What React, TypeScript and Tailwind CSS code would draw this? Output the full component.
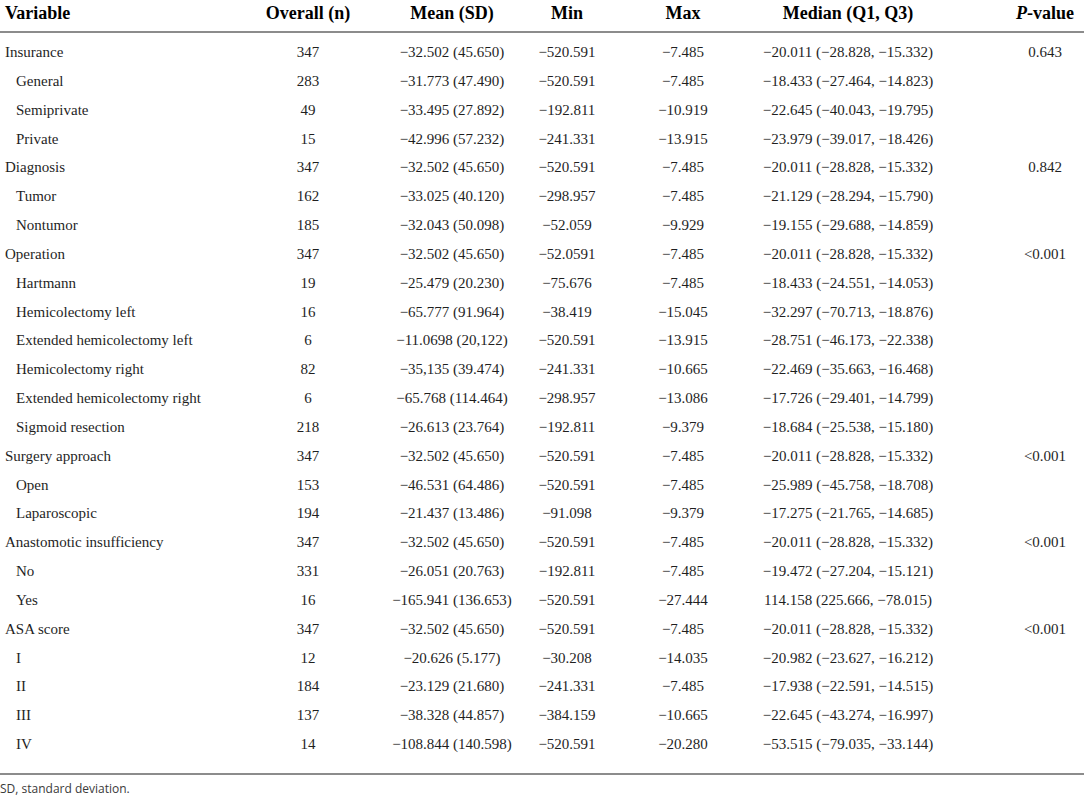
import React from "react";

type Row = { label: string; sub?: boolean; n: string; mean: string; min: string; max: string; median: string; p?: string };

const rows: Row[] = [
  { label: "Insurance", n: "347", mean: "−32.502 (45.650)", min: "−520.591", max: "−7.485", median: "−20.011 (−28.828, −15.332)", p: "0.643" },
  { label: "General", sub: true, n: "283", mean: "−31.773 (47.490)", min: "−520.591", max: "−7.485", median: "−18.433 (−27.464, −14.823)" },
  { label: "Semiprivate", sub: true, n: "49", mean: "−33.495 (27.892)", min: "−192.811", max: "−10.919", median: "−22.645 (−40.043, −19.795)" },
  { label: "Private", sub: true, n: "15", mean: "−42.996 (57.232)", min: "−241.331", max: "−13.915", median: "−23.979 (−39.017, −18.426)" },
  { label: "Diagnosis", n: "347", mean: "−32.502 (45.650)", min: "−520.591", max: "−7.485", median: "−20.011 (−28.828, −15.332)", p: "0.842" },
  { label: "Tumor", sub: true, n: "162", mean: "−33.025 (40.120)", min: "−298.957", max: "−7.485", median: "−21.129 (−28.294, −15.790)" },
  { label: "Nontumor", sub: true, n: "185", mean: "−32.043 (50.098)", min: "−52.059", max: "−9.929", median: "−19.155 (−29.688, −14.859)" },
  { label: "Operation", n: "347", mean: "−32.502 (45.650)", min: "−52.0591", max: "−7.485", median: "−20.011 (−28.828, −15.332)", p: "<0.001" },
  { label: "Hartmann", sub: true, n: "19", mean: "−25.479 (20.230)", min: "−75.676", max: "−7.485", median: "−18.433 (−24.551, −14.053)" },
  { label: "Hemicolectomy left", sub: true, n: "16", mean: "−65.777 (91.964)", min: "−38.419", max: "−15.045", median: "−32.297 (−70.713, −18.876)" },
  { label: "Extended hemicolectomy left", sub: true, n: "6", mean: "−11.0698 (20,122)", min: "−520.591", max: "−13.915", median: "−28.751 (−46.173, −22.338)" },
  { label: "Hemicolectomy right", sub: true, n: "82", mean: "−35,135 (39.474)", min: "−241.331", max: "−10.665", median: "−22.469 (−35.663, −16.468)" },
  { label: "Extended hemicolectomy right", sub: true, n: "6", mean: "−65.768 (114.464)", min: "−298.957", max: "−13.086", median: "−17.726 (−29.401, −14.799)" },
  { label: "Sigmoid resection", sub: true, n: "218", mean: "−26.613 (23.764)", min: "−192.811", max: "−9.379", median: "−18.684 (−25.538, −15.180)" },
  { label: "Surgery approach", n: "347", mean: "−32.502 (45.650)", min: "−520.591", max: "−7.485", median: "−20.011 (−28.828, −15.332)", p: "<0.001" },
  { label: "Open", sub: true, n: "153", mean: "−46.531 (64.486)", min: "−520.591", max: "−7.485", median: "−25.989 (−45.758, −18.708)" },
  { label: "Laparoscopic", sub: true, n: "194", mean: "−21.437 (13.486)", min: "−91.098", max: "−9.379", median: "−17.275 (−21.765, −14.685)" },
  { label: "Anastomotic insufficiency", n: "347", mean: "−32.502 (45.650)", min: "−520.591", max: "−7.485", median: "−20.011 (−28.828, −15.332)", p: "<0.001" },
  { label: "No", sub: true, n: "331", mean: "−26.051 (20.763)", min: "−192.811", max: "−7.485", median: "−19.472 (−27.204, −15.121)" },
  { label: "Yes", sub: true, n: "16", mean: "−165.941 (136.653)", min: "−520.591", max: "−27.444", median: "114.158 (225.666, −78.015)" },
  { label: "ASA score", n: "347", mean: "−32.502 (45.650)", min: "−520.591", max: "−7.485", median: "−20.011 (−28.828, −15.332)", p: "<0.001" },
  { label: "I", sub: true, n: "12", mean: "−20.626 (5.177)", min: "−30.208", max: "−14.035", median: "−20.982 (−23.627, −16.212)" },
  { label: "II", sub: true, n: "184", mean: "−23.129 (21.680)", min: "−241.331", max: "−7.485", median: "−17.938 (−22.591, −14.515)" },
  { label: "III", sub: true, n: "137", mean: "−38.328 (44.857)", min: "−384.159", max: "−10.665", median: "−22.645 (−43.274, −16.997)" },
  { label: "IV", sub: true, n: "14", mean: "−108.844 (140.598)", min: "−520.591", max: "−20.280", median: "−53.515 (−79.035, −33.144)" },
];

const grid = "grid grid-cols-[240px_136px_152px_78px_154px_176px_148px] items-center";

export default function App() {
  return (
    <div className="w-[1084px] h-[800px] bg-white overflow-hidden text-[#1f1f1f]" style={{ fontFamily: '"Liberation Serif", "Times New Roman", serif' }}>
      <div className={`${grid} h-[24px] mb-[7px] text-[18px] font-bold text-black`}>
        <div className="pl-[5px]">Variable</div>
        <div className="text-center">Overall (n)</div>
        <div className="text-center">Mean (SD)</div>
        <div className="text-center">Min</div>
        <div className="text-center">Max</div>
        <div className="text-center">Median (Q1, Q3)</div>
        <div className="pl-[70px] text-center whitespace-nowrap"><i>P</i>-value</div>
      </div>
      <div className="h-[2px] bg-[#8c8c8c]" />
      <div className="pt-[5px] pb-[14px] text-[15px]">
        {rows.map((r, i) => (
          <div key={i} className={`${grid} h-[28.83px]`}>
            <div className={r.sub ? "pl-[16px] whitespace-nowrap" : "pl-[5px] whitespace-nowrap"}>{r.label}</div>
            <div className="text-center">{r.n}</div>
            <div className="text-center whitespace-nowrap">{r.mean}</div>
            <div className="text-center">{r.min}</div>
            <div className="text-center">{r.max}</div>
            <div className="text-center whitespace-nowrap">{r.median}</div>
            <div className="pl-[70px] text-center">{r.p ?? ""}</div>
          </div>
        ))}
      </div>
      <div className="h-[2px] bg-[#8c8c8c]" />
      <div className="pt-[5px] text-[12px] text-[#3a3a3a]" style={{ fontFamily: '"Open Sans", "Noto Sans", sans-serif' }}>
        SD, standard deviation.
      </div>
    </div>
  );
}
